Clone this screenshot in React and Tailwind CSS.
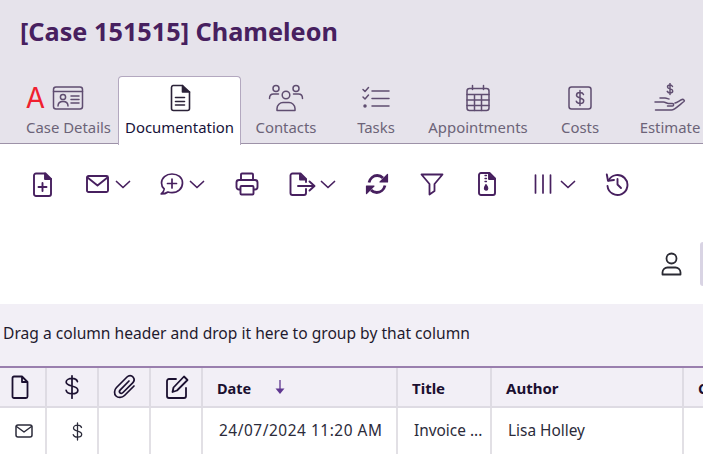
import React from "react";

const S = ({ w = 24, h = 24, vb = "0 0 24 24", sw = 1.6, className = "", children }) => (
  <svg width={w} height={h} viewBox={vb} fill="none" stroke="currentColor" strokeWidth={sw} strokeLinecap="round" strokeLinejoin="round" className={"block shrink-0 " + className}>
    {children}
  </svg>
);

const Chevron = ({ className = "" }) => (
  <svg width="16" height="9" viewBox="0 0 16 9" fill="none" stroke="currentColor" strokeWidth="1.7" strokeLinecap="round" strokeLinejoin="round" className={"block shrink-0 " + className}>
    <path d="M1.5 1.5 8 7.5l6.5-6" />
  </svg>
);

const IdCardIcon = () => (
  <S w={32} h={26} vb="0 0 32 26" sw={1.5}>
    <rect x="1.500" y="2" width="29" height="22" rx="2.500" />
    <path d="M1.500 6.500h29" />
    <circle cx="11" cy="12" r="2.600" />
    <path d="M6 21c0-3 2.200-4.600 5-4.600s5 1.600 5 4.600" />
    <path d="M19 11h8M19 14.500h8M19 18h8" />
  </S>
);
const DocIcon = () => (
  <S w={22} h={28} vb="0 0 22 28" sw={1.6}>
    <path d="M4 1.500h9.500L20.500 8v16.500a2 2 0 0 1-2 2h-14a2 2 0 0 1-2-2v-21a2 2 0 0 1 1.500-2Z" />
    <path d="M13.500 1.500V8h7" fill="currentColor" />
    <path d="M6.500 13.500h9M6.500 17.500h9M6.500 21h9" />
  </S>
);
const PeopleIcon = () => (
  <S w={36} h={28} vb="0 0 36 28" sw={1.5}>
    <circle cx="18" cy="11" r="3.800" />
    <path d="M9 26.500v-2c0-3.500 3-6 6-6h6c3 0 6 2.500 6 6v2Z" />
    <circle cx="8" cy="4.500" r="3" />
    <circle cx="28" cy="4.500" r="3" />
    <path d="M1.500 14.500c0-3 2-4.500 4-4.500h5M34.500 14.500c0-3-2-4.500-4-4.500h-5" />
  </S>
);
const TasksIcon = () => (
  <S w={30} h={24} vb="0 0 30 24" sw={1.5}>
    <path d="M2 3.500l2 2 3.500-4M2 11l2 2 3.500-4" />
    <circle cx="4" cy="20" r="1" fill="currentColor" />
    <path d="M11 5h17M11 12.500h17M11 20h17" />
  </S>
);
const CalIcon = () => (
  <S w={26} h={28} vb="0 0 26 28" sw={1.5}>
    <rect x="2" y="4.500" width="22" height="22" rx="2.500" />
    <path d="M7.500 1.500v4M18.500 1.500v4M2 10.500h22M2 16h22M2 21.500h22M9.500 10.500v16M16.500 10.500v16" />
  </S>
);
const CostIcon = () => (
  <S w={26} h={26} vb="0 0 26 26" sw={1.5}>
    <rect x="2" y="2" width="22" height="22" rx="2.500" />
    <path d="M16.500 9.500c-.5-1.300-1.800-2-3.500-2-2 0-3.500 1-3.500 2.700 0 3.600 7.200 1.900 7.200 5.500 0 1.800-1.600 2.800-3.700 2.800-1.800 0-3.200-.8-3.700-2.200M13 5.500v15" />
  </S>
);
const HandIcon = () => (
  <S w={32} h={30} vb="0 0 32 30" sw={1.5}>
    <path d="M18.500 3.500c-.5-1-1.400-1.500-2.500-1.500-1.400 0-2.500.7-2.500 1.900 0 2.600 5.200 1.400 5.200 4 0 1.300-1.200 2-2.700 2-1.300 0-2.300-.6-2.700-1.500M16 .5v11" />
    <path d="M1 19h8.500c2 0 3 1.500 5 1.500h4c1.500 0 1.500 2.500 0 2.500h-5M1.500 27h16c3 0 9-6 12.500-8.500 1-1-.5-2.500-2-2-2 .8-5 3-7 3.500" />
    <path d="M6 15h5c2 0 3 1 4 1" />
  </S>
);

const Tab = ({ label, icon, active, extra = "" }) => (
  <div className={(active
    ? "bg-white border border-b-0 border-[#b3a8bf] rounded-t-[4px] text-[#16123a] h-[69px] -mb-px z-10 pt-[5px] "
    : "text-[#6c6378] h-[68px] pt-[6px] ") + "flex flex-col items-center shrink-0 min-w-[90px] px-[7px] " + extra}>
    <div className={"h-[31px] flex items-center justify-center " + (active ? "text-[#2b2238]" : "text-[#5f4d70]")}>{icon}</div>
    <span className="mt-[4px] text-[14.900px] leading-[20px] whitespace-nowrap">{label}</span>
  </div>
);

const HeaderCell = ({ className = "", children }) => (
  <div className={"h-full flex items-center border-r-2 border-[#dedbe3] shrink-0 " + className}>{children}</div>
);
const RowCell = ({ className = "", children }) => (
  <div className={"h-full flex items-center border-r-2 border-[#e2e0e5] shrink-0 " + className}>{children}</div>
);

export default function App() {
  return (
    <div className="w-[703px] h-[454px] overflow-hidden bg-white font-['Noto_Sans','Open_Sans',sans-serif]">
      <header className="h-[144px] bg-[#e6e3eb] border-b border-[#9d92a8] flex flex-col">
        <h1 className="pl-[20px] pt-[14px] h-[76px] shrink-0 text-[25.250px] leading-[34px] font-bold text-[#47205f]">[Case 151515] Chameleon</h1>
        <nav className="flex pl-[19px] items-start">
          <Tab label="Case Details" extra="w-[99px]" icon={
            <span className="flex items-center gap-[7px] -ml-[27px]">
              <span className="text-[#f0202f] text-[28px] leading-none font-['Inter',sans-serif]">A</span>
              <IdCardIcon />
            </span>} />
          <Tab label="Documentation" active extra="w-[123px]" icon={<DocIcon />} />
          <Tab label="Contacts" icon={<PeopleIcon />} />
          <Tab label="Tasks" icon={<TasksIcon />} />
          <Tab label="Appointments" extra="w-[114px]" icon={<CalIcon />} />
          <Tab label="Costs" icon={<CostIcon />} />
          <Tab label="Estimate" icon={<HandIcon />} />
        </nav>
      </header>

      <div className="h-[80px] flex items-center pl-[33px] text-[#47205f]">
        <S w={19} h={25} vb="0 0 19 25" sw={1.9}>
          <path d="M3 1.500h9.500L18 7v15a2 2 0 0 1-2 2H3a2 2 0 0 1-2-2V3.500a2 2 0 0 1 2-2Z" />
          <path d="M12 1.500V7h6" fill="currentColor" />
          <path d="M9.500 11v8M5.500 15h8" />
        </S>
        <S w={23} h={18} vb="0 0 23 18" sw={1.9} className="ml-[34px]">
          <rect x="1" y="1" width="21" height="16" rx="1.500" />
          <path d="M1.500 2.500 11.500 10.500 21.500 2.500" />
        </S>
        <Chevron className="ml-[6px]" />
        <S w={25} h={24} vb="0 0 25 24" sw={1.7} className="ml-[28px]">
          <path d="M13 2C7 2 2.500 6 2.500 11c0 2.500 1 4.500 2.700 6-.2 1.800-1 3.500-3 5 3 0 5.500-1 6.800-2 1.300.5 2.600.700 4 .700 6 0 10.500-4.200 10.500-9.700S19 2 13 2Z" />
          <path d="M13 7v9M8.500 11.500h9" />
        </S>
        <Chevron className="ml-[5px]" />
        <S w={24} h={24} vb="0 0 24 24" sw={1.9} className="ml-[30px]">
          <path d="M6 8V2.500a1 1 0 0 1 1-1h10a1 1 0 0 1 1 1V8" />
          <rect x="1.500" y="8" width="21" height="9.500" rx="2.500" />
          <rect x="5.500" y="14" width="13" height="8.500" rx="1" fill="#fff" />
        </S>
        <S w={27} h={24} vb="0 0 27 24" sw={1.9} className="ml-[30px]">
          <path d="M17 10V7l-5.500-5.500H3.500a2 2 0 0 0-2 2V21a2 2 0 0 0 2 2h11.500a2 2 0 0 0 2-2v-4" />
          <path d="M11 2v5.500h6" fill="currentColor" />
          <path d="M9 14h16M20.500 9.500 25.500 14l-5 4.500" />
        </S>
        <Chevron className="ml-[4px]" />
        <S w={24} h={24} vb="0 0 24 24" sw={1.2} className="ml-[29px]">
          <path d="M4 10.500C5 6.500 8.300 3.500 12.300 3.500c2.300 0 4.300 1 5.700 2.500" strokeWidth="2.800" strokeLinecap="butt" />
          <path d="M22.500 2.500v7.500H15Z" fill="currentColor" />
          <path d="M20 13.500c-1 4-4.300 7-8.300 7-2.300 0-4.300-1-5.700-2.500" strokeWidth="2.800" strokeLinecap="butt" />
          <path d="M1.500 21.500V14H9Z" fill="currentColor" />
        </S>
        <S w={24} h={23} vb="0 0 24 23" sw={1.8} className="ml-[31px]">
          <path d="M1.500 1.500h21L14.500 11v7l-5 3.500V11Z" />
        </S>
        <S w={18} h={24} vb="0 0 18 24" sw={1.9} className="ml-[34px]">
          <path d="M3 1h8.500L17 6.500V21a2 2 0 0 1-2 2H3a2 2 0 0 1-2-2V3a2 2 0 0 1 2-2Z" />
          <path d="M11 1.500V7h6" fill="currentColor" />
          <path d="M7 3.500h1.500M7 6.500h1.500M7 9.500h1.500" strokeWidth="1.300" />
          <path d="M8 12.500c-.9 1.600-1.600 2.600-1.600 4a1.700 1.700 0 0 0 3.400 0c0-1.400-.9-2.400-1.800-4Z" fill="currentColor" strokeWidth="1.100" />
        </S>
        <S w={18} h={20} vb="0 0 18 20" sw={1.7} className="ml-[38px]">
          <path d="M1.500 1v18M9 1v18M16.500 1v18" />
        </S>
        <Chevron className="ml-[8px]" />
        <S w={24} h={24} vb="0 0 24 24" sw={1.9} className="ml-[29px]">
          <path d="M3.500 8.500A10 10 0 1 1 2.500 14" />
          <path d="M1.800 2.500 3 8.800l6-.8" />
          <path d="M12.500 7v5.500l3.500 3.500" />
        </S>
      </div>

      <div className="h-[80px] flex items-center justify-end">
        <div className="text-[#2a2a33]">
          <S w={21} h={24} vb="0 0 21 24" sw={1.8}>
            <circle cx="10.500" cy="6.500" r="5" />
            <path d="M1.500 22.500v-2c0-3 2.500-5 5-5h8c2.500 0 5 2 5 5v2Z" />
          </S>
        </div>
        <div className="ml-[18px] w-[3px] h-[44px] bg-[#d9d4e4] rounded-l-[4px]" />
      </div>

      <div className="h-[62px] bg-[#f2eff6] flex items-center pl-[3px] pb-[3px] text-[15.600px] text-[#1f1a2e] whitespace-nowrap">
        Drag a column header and drop it here to group by that column
      </div>

      <div className="h-[42px] bg-[#f2eff6] border-t-2 border-[#9a7fae] border-b-2 border-b-[#dedbe3] flex text-[#1b1030]">
        <HeaderCell className="w-[47px] pl-[11px]">
          <S w={18} h={24} vb="0 0 18 24" sw={1.8}>
            <path d="M3 1.500h8L16.500 7v14.500a1.500 1.500 0 0 1-1.500 1.500H3a1.500 1.500 0 0 1-1.500-1.500V3A1.500 1.500 0 0 1 3 1.500ZM11 1.500V7h5.500" />
          </S>
        </HeaderCell>
        <HeaderCell className="w-[52px] pl-[16px]">
          <S w={18} h={26} vb="0 0 20 28" sw={1.9}>
            <path d="M16 8c-.6-2-2.800-3.500-6-3.500S3.500 6 3.500 8.500c0 5.800 13 3 13 9 0 2.500-2.700 4-6.500 4s-6-1.500-6.500-3.800M10 1.500v25" />
          </S>
        </HeaderCell>
        <HeaderCell className="w-[52px] pl-[14px]">
          <S w={24} h={26} vb="0 0 24 26" sw={1.7}>
            <path d="M21 12 11.500 21.500c-2.500 2.500-6.500 2.500-8.500.5s-2-6 .5-8.500L14 3c1.800-1.800 4.500-1.800 6 0s1.500 4-.3 5.800L10 18.500c-1 1-2.300 1-3 .3s-.7-2 .3-3L16 7" />
          </S>
        </HeaderCell>
        <HeaderCell className="w-[52px] pl-[14px]">
          <S w={24} h={24} vb="0 0 24 24" sw={1.8}>
            <path d="M11 4H4a2 2 0 0 0-2 2v15a2 2 0 0 0 2 2h15a2 2 0 0 0 2-2v-8" />
            <path d="M19 1.500 22.500 5 12 15.500 7.500 17l1-4.500Z" />
          </S>
        </HeaderCell>
        <HeaderCell className="w-[195px] pl-[14px] font-bold text-[14.500px] pt-[3px]">
          <span>Date</span>
          <svg width="10" height="15" viewBox="0 0 10 15" className="block ml-[24px] -mt-[3px] text-[#5f3790]">
            <path d="M5 0v9" stroke="currentColor" strokeWidth="1.300" />
            <path d="M0.500 8.500h9L5 14Z" fill="currentColor" />
          </svg>
        </HeaderCell>
        <HeaderCell className="w-[94px] pl-[14px] pt-[2px] font-bold text-[15px]">Title</HeaderCell>
        <HeaderCell className="w-[192px] pl-[14px] pt-[2px] font-bold text-[15px]">Author</HeaderCell>
        <div className="pl-[14px] pt-[2px] h-full flex items-center font-bold text-[15px] whitespace-nowrap">Created</div>
      </div>

      <div className="h-[46px] flex text-[15.400px] text-[#2b2b3a]">
        <RowCell className="w-[47px] pl-[15px]">
          <S w={18} h={14} vb="0 0 18 14" sw={1.5}>
            <rect x="1" y="1" width="16" height="12" rx="2" />
            <path d="M1.500 2.500 9 8l7.500-5.500" />
          </S>
        </RowCell>
        <RowCell className="w-[52px] pl-[24px]">
          <S w={13} h={19} vb="0 0 13 19" sw={1.3}>
            <path d="M10.500 5.500C10 4 8.500 3.200 6.500 3.200 4.200 3.200 2.500 4.300 2.500 6c0 4 8.200 2.200 8.200 6.300 0 1.800-1.800 2.900-4.200 2.900s-3.900-1-4.300-2.600M6.500 1v17" />
          </S>
        </RowCell>
        <RowCell className="w-[52px]" />
        <RowCell className="w-[52px]" />
        <RowCell className="w-[195px] pl-[16px] tracking-[0.55px] whitespace-nowrap">24/07/2024 11:20 AM</RowCell>
        <RowCell className="w-[94px] pl-[16px] whitespace-nowrap">Invoice ...</RowCell>
        <RowCell className="w-[192px] pl-[16px] whitespace-nowrap">Lisa Holley</RowCell>
      </div>
    </div>
  );
}
